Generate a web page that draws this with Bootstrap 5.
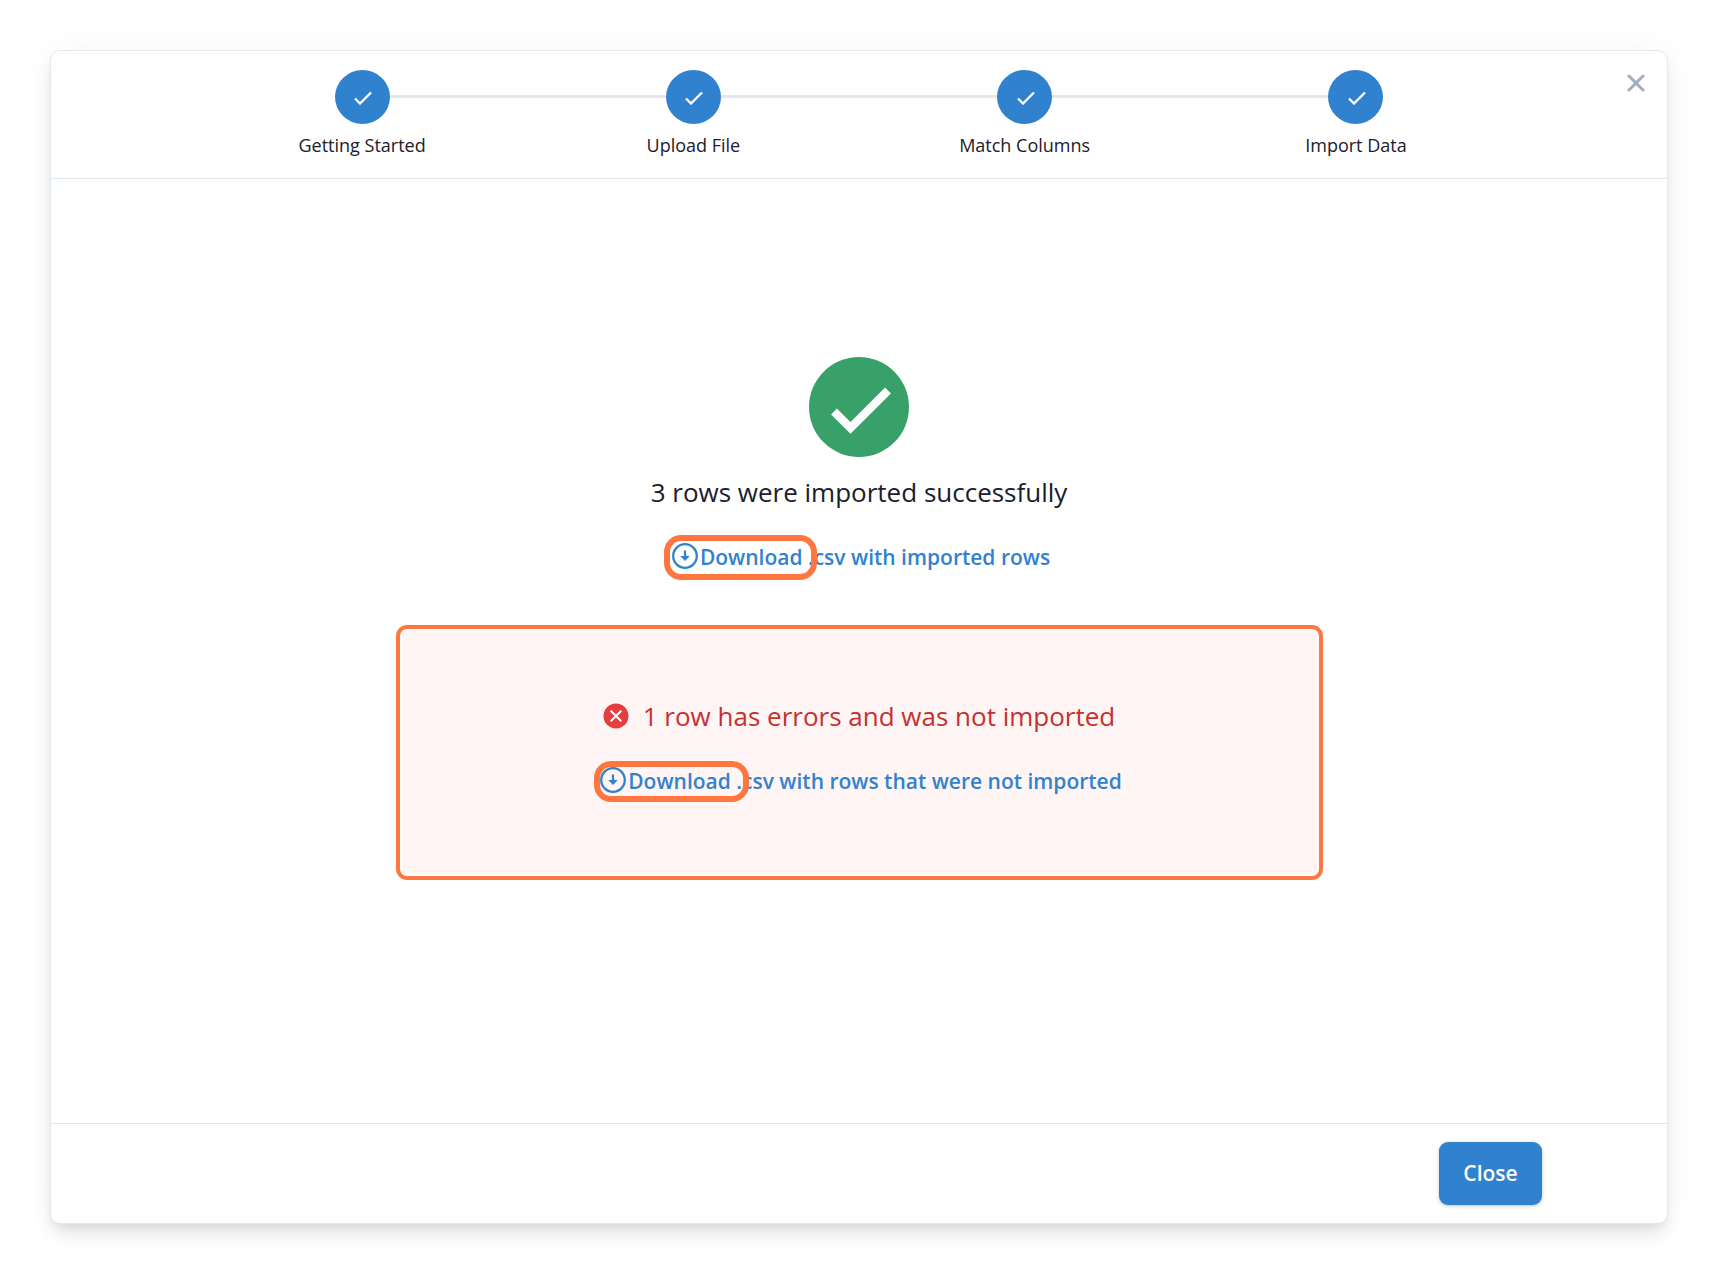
<!DOCTYPE html>
<html lang="en">
<head>
<meta charset="utf-8">
<meta name="viewport" content="width=device-width, initial-scale=1">
<title>Import Data</title>
<link href="https://cdn.jsdelivr.net/npm/bootstrap@5.3.0/dist/css/bootstrap.min.css" rel="stylesheet">
<style>
  body { font-family: "Open Sans", "Noto Sans", sans-serif; color: #1a202c; background: #fff; }
  .page { padding: 50px 49px 48px 50px; }
  .wizard { border: 1px solid #e2e8f0; border-radius: 10px; background: #fff;
    box-shadow: 0 13px 19px -4px rgba(0,0,0,.1), 0 5px 8px -2px rgba(0,0,0,.05), 0 0 32px rgba(0,0,0,.04); }
  .wizard-head { padding: 19px 0; border-bottom: 1px solid #e2e8f0; }
  .steps { width: 82%; }
  .step-rail { height: 3px; margin-bottom: 1px; background: #e2e8f0; }
  .step:first-child .step-rail:first-child, .step:last-child .step-rail:last-child { background: transparent; }
  .step-dot { width: 55px; height: 54px; padding: 2px 0 0 2px; background: #3182ce; }
  .step-label { margin-top: 8px; font-size: 18px; line-height: 27px; }
  .dismiss { top: 16px; right: 15px; width: 32px; height: 32px; }
  .wizard-body { padding-bottom: 66px; }
  .result-title { font-size: 26px; line-height: 36px; font-weight: 400; }
  .result-title.ok { margin: 17px 0 31px; }
  .result-title.failed { margin: 0 0 31px; color: #c53030; gap: 14px; }
  .dl { padding-left: 4px; font-size: 21px; line-height: 33px; font-weight: 600; color: #3182ce; text-decoration: none; white-space: pre; }
  .dl-key { gap: 2px; }
  .dl-key svg { margin-bottom: 2px; }
  .dl-key::after { content: ""; position: absolute; inset: -6px -15px -6px -8px; border: 6px solid #ff7640; border-radius: 17px; }
  .error-frame { width: 927px; max-width: 95%; margin-top: 51px; padding: 2px; border: 4px solid #ff7640; border-radius: 11px; }
  .error-panel { background: #fff5f5; padding: 67px 16px 76px; border-radius: 5px; }
  .error-panel .dl-key::after { inset: -4px -18px -4px -6px; }
  .wizard-foot { padding: 18px 125px 18px 16px; border-top: 1px solid #e2e8f0; }
  .btn-done { width: 103px; height: 63px; border: 0; border-radius: 9px; background: #3182ce; color: #fff; font-size: 21px; font-weight: 600;
    box-shadow: 0 1px 4px rgba(0,0,0,.2), 0 1px 2px rgba(0,0,0,.06); }
</style>
<script src="https://cdn.jsdelivr.net/npm/bootstrap@5.3.0/dist/js/bootstrap.bundle.min.js"></script>
</head>
<body>
<svg class="d-none" aria-hidden="true">
  <symbol id="tick" viewBox="0 0 18 14"><path d="M1 7.5 6 12.5 17 1.5" fill="none" stroke="#fff" stroke-width="2.3"/></symbol>
  <symbol id="down" viewBox="0 0 26 26">
    <circle cx="13" cy="13" r="11.8" fill="none" stroke="#3182ce" stroke-width="2.3"/>
    <path d="M11.9 7.5h2.2v5.4h3.7L13 18l-4.8-5.1h3.7z" fill="#3182ce"/>
  </symbol>
</svg>
<div class="page min-vh-100 d-flex">
  <div class="wizard position-relative flex-grow-1 d-flex flex-column">
    <header class="wizard-head d-flex justify-content-center">
      <ol class="steps list-unstyled d-flex mb-0">
        <li class="step flex-fill w-25 text-center">
          <div class="d-flex align-items-center"><span class="step-rail flex-fill"></span><span class="step-dot rounded-circle d-flex align-items-center justify-content-center"><svg width="18" height="14"><use href="#tick"/></svg></span><span class="step-rail flex-fill"></span></div>
          <div class="step-label">Getting Started</div>
        </li>
        <li class="step flex-fill w-25 text-center">
          <div class="d-flex align-items-center"><span class="step-rail flex-fill"></span><span class="step-dot rounded-circle d-flex align-items-center justify-content-center"><svg width="18" height="14"><use href="#tick"/></svg></span><span class="step-rail flex-fill"></span></div>
          <div class="step-label">Upload File</div>
        </li>
        <li class="step flex-fill w-25 text-center">
          <div class="d-flex align-items-center"><span class="step-rail flex-fill"></span><span class="step-dot rounded-circle d-flex align-items-center justify-content-center"><svg width="18" height="14"><use href="#tick"/></svg></span><span class="step-rail flex-fill"></span></div>
          <div class="step-label">Match Columns</div>
        </li>
        <li class="step flex-fill w-25 text-center">
          <div class="d-flex align-items-center"><span class="step-rail flex-fill"></span><span class="step-dot rounded-circle d-flex align-items-center justify-content-center"><svg width="18" height="14"><use href="#tick"/></svg></span><span class="step-rail flex-fill"></span></div>
          <div class="step-label">Import Data</div>
        </li>
      </ol>
      <button type="button" class="dismiss btn p-0 border-0 position-absolute d-flex align-items-center justify-content-center" aria-label="Dismiss">
        <svg width="18" height="18" viewBox="0 0 18 18"><path d="M2 2l14 14M16 2L2 16" stroke="#a0aec0" stroke-width="3" stroke-linecap="round"/></svg>
      </button>
    </header>
    <main class="wizard-body flex-grow-1 d-flex flex-column align-items-center justify-content-center">
      <svg width="100" height="100" viewBox="0 0 100 100" aria-hidden="true"><circle cx="50" cy="50" r="50" fill="#38a169"/><path d="M25 54.5 41.5 71 79 33.500" fill="none" stroke="#fff" stroke-width="8.3"/></svg>
      <h1 class="result-title ok">3 rows were imported successfully</h1>
      <a href="#imported" class="dl d-flex"><span class="dl-key position-relative d-flex align-items-center"><svg width="26" height="26"><use href="#down"/></svg>Download</span> <span> .csv with imported rows</span></a>
      <section class="error-frame">
        <div class="error-panel d-flex flex-column align-items-center">
          <h2 class="result-title failed d-flex align-items-center">
            <svg width="26" height="26" viewBox="0 0 26 26" aria-hidden="true"><circle cx="13" cy="13" r="12.5" fill="#e53e3e"/><path d="M7.7 7.7l10.6 10.6M18.3 7.7L7.7 18.3" stroke="#fff" stroke-width="2"/></svg>
            <span>1 row has errors and was not imported</span>
          </h2>
          <a href="#failed" class="dl d-flex"><span class="dl-key position-relative d-flex align-items-center"><svg width="26" height="26"><use href="#down"/></svg>Download</span> <span> .csv with rows that were not imported</span></a>
        </div>
      </section>
    </main>
    <footer class="wizard-foot d-flex justify-content-end">
      <button type="button" class="btn-done btn">Close</button>
    </footer>
  </div>
</div>
</body>
</html>
